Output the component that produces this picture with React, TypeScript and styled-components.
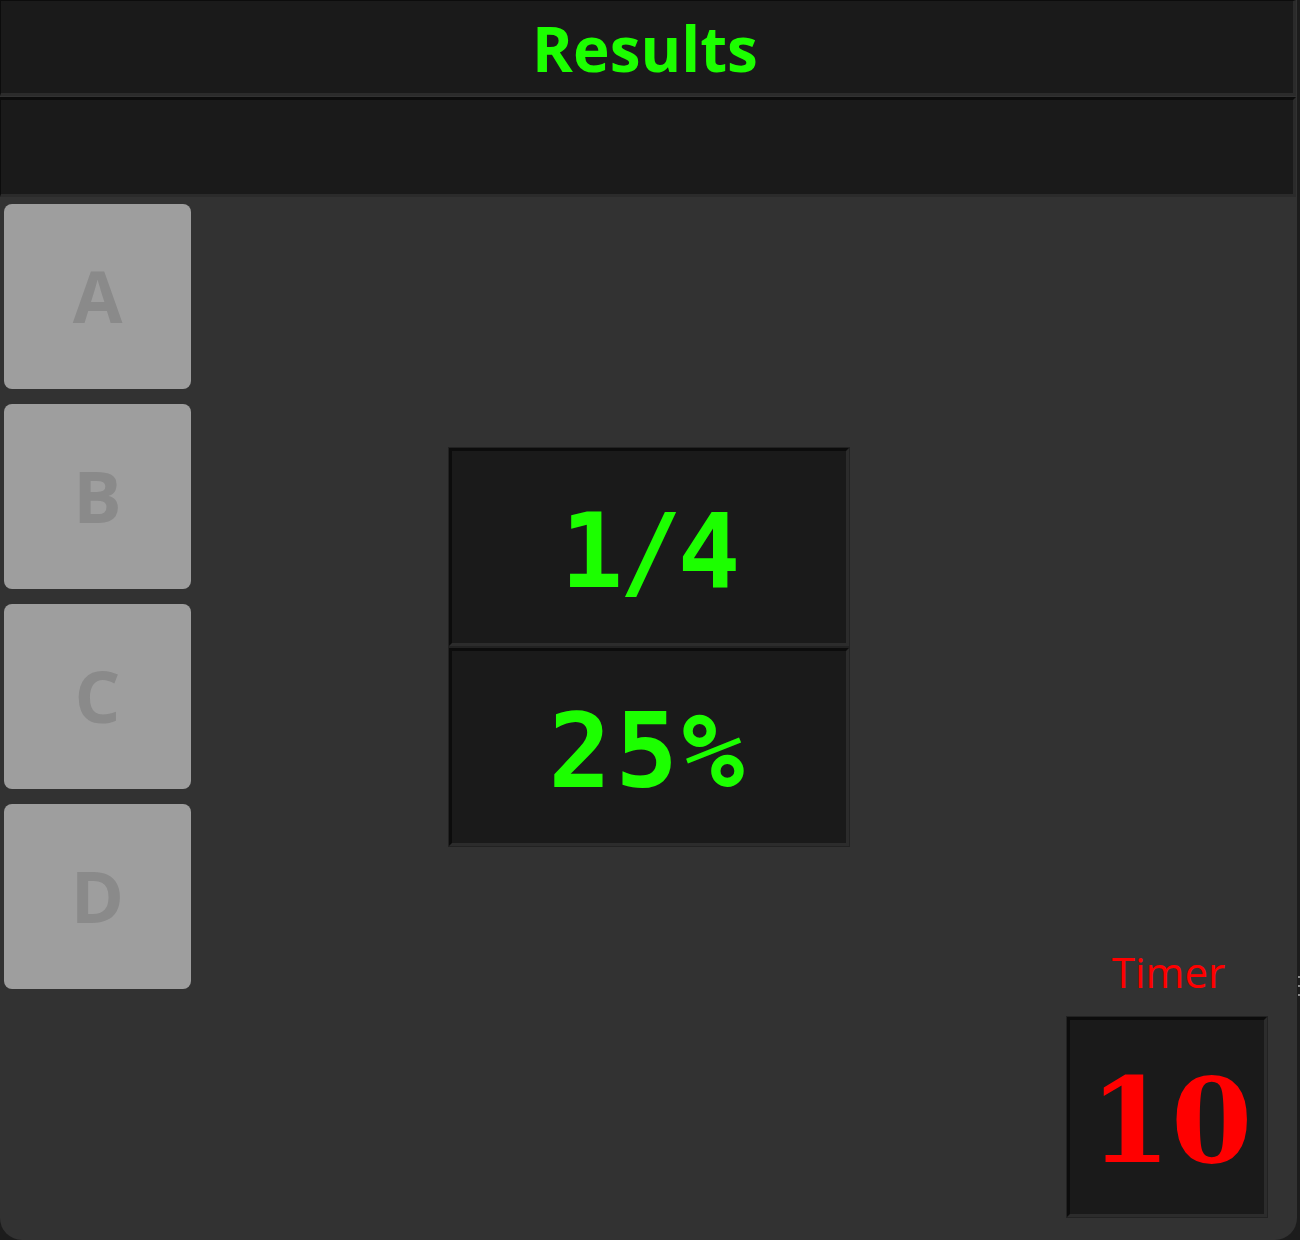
import React from "react";
import styled, { createGlobalStyle } from "styled-components";

const Global = createGlobalStyle`
  html, body { margin: 0; padding: 0; background: #1c1c1c; }
  body { width: 1300px; height: 1240px; overflow: hidden; }
  #root { width: 1300px; height: 1240px; }
`;

const Window = styled.div`
  position: relative;
  width: 1297px;
  height: 1240px;
  background: #323232;
  border-radius: 0 0 22px 22px;
  display: flex;
  flex-direction: column;
  overflow: hidden;
`;

const Bar = styled.div<{ $h: number; $top: number }>`
  box-sizing: border-box;
  height: ${(p) => p.$h}px;
  margin-right: 1px;
  background: #1a1a1a;
  border-style: solid;
  border-width: ${(p) => p.$top}px 3px 3px 1px;
  border-color: #0c0c0c #2b2b2b #2b2b2b #0c0c0c;
  display: flex;
  align-items: center;
  justify-content: center;
`;

const Title = styled.h1`
  margin: 0;
  font-family: "Open Sans", "DejaVu Sans", sans-serif;
  font-weight: 700;
  font-size: 62px;
  line-height: 1;
  color: #1cff00;
  transform: translate(-2px, 1px);
`;

const Spacer = styled.div`
  height: 1px;
`;

const Body = styled.div`
  flex: 1;
  display: grid;
  grid-template-columns: 1fr 400px 1fr;
`;

const Choices = styled.div`
  display: flex;
  flex-direction: column;
  gap: 15px;
  padding: 7px 0 0 4px;
`;

const Choice = styled.button`
  width: 187px;
  height: 185px;
  border: none;
  border-radius: 8px;
  background: #9e9e9e;
  color: #8a8a8a;
  font-family: "Open Sans", "DejaVu Sans", sans-serif;
  font-weight: 700;
  font-size: 72px;
  line-height: 1;
  padding: 0 0 4px 0;
  display: flex;
  align-items: center;
  justify-content: center;
`;

const Center = styled.div`
  display: flex;
  flex-direction: column;
  gap: 2px;
  padding-top: 251px;
`;

const ValueBox = styled.div<{ $w: number; $h: number }>`
  box-sizing: border-box;
  width: ${(p) => p.$w}px;
  height: ${(p) => p.$h}px;
  background: #1a1a1a;
  border-style: solid;
  border-width: 3px;
  border-color: #0c0c0c #2c2c2c #2c2c2c #0c0c0c;
  box-shadow: 0 0 0 1px #222222;
  display: flex;
  align-items: center;
  justify-content: center;
`;

const MonoValue = styled.span<{ $spacing: number }>`
  font-family: "DejaVu Sans Mono", "Liberation Mono", monospace;
  font-weight: 700;
  font-size: 104px;
  line-height: 1;
  letter-spacing: ${(p) => p.$spacing}px;
  color: #1cff00;
  transform: translateY(4px);
`;

const Right = styled.div`
  display: flex;
  flex-direction: column;
  justify-content: flex-end;
  align-items: flex-end;
  padding: 0 30px 23px 0;
`;

const TimerGroup = styled.div`
  display: flex;
  flex-direction: column;
  align-items: center;
  gap: 24px;
`;

const TimerLabel = styled.div`
  font-family: "Open Sans", "DejaVu Sans", sans-serif;
  font-size: 42px;
  line-height: 1;
  color: #ff0000;
  padding-left: 3px;
`;

const TimerValue = styled.span`
  font-family: "DejaVu Serif", "Liberation Serif", serif;
  font-weight: 700;
  font-size: 117px;
  line-height: 1;
  color: #ff0000;
  transform: translate(4px, 4px);
`;

const Grip = styled.div`
  position: absolute;
  top: 976px;
  width: 2px;
  display: flex;
  flex-direction: column;
  gap: 7px;
  & > i {
    display: block;
    height: 2px;
    background: #8a8a8a;
  }
`;

export default function App() {
  return (
    <>
      <Global />
      <Window>
        <Bar $h={96} $top={1}>
          <Title>Results</Title>
        </Bar>
        <Spacer />
        <Bar $h={100} $top={3} />
        <Body>
          <Choices>
            {["A", "B", "C", "D"].map((l) => (
              <Choice key={l}>{l}</Choice>
            ))}
          </Choices>
          <Center>
            <ValueBox $w={400} $h={198}>
              <MonoValue $spacing={-4}>1/4</MonoValue>
            </ValueBox>
            <ValueBox $w={400} $h={198}>
              <MonoValue $spacing={4}>25%</MonoValue>
            </ValueBox>
          </Center>
          <Right>
            <TimerGroup>
              <TimerLabel>Timer</TimerLabel>
              <ValueBox $w={200} $h={200}>
                <TimerValue>10</TimerValue>
              </ValueBox>
            </TimerGroup>
          </Right>
        </Body>
      </Window>
      <Grip style={{ left: 1298 }}>
        <i />
        <i />
        <i />
      </Grip>
    </>
  );
}
